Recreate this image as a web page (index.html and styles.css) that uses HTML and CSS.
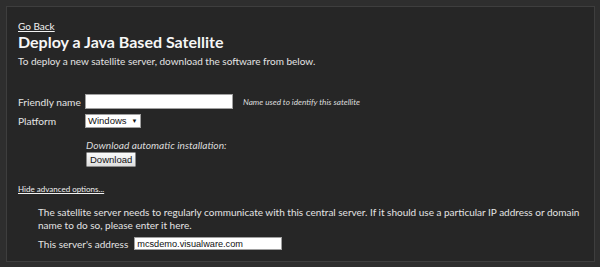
FILE: index.html
```html
<!DOCTYPE html>
<html>
<head>
<meta charset="utf-8">
<link rel="stylesheet" href="styles.css">
</head>
<body>
<div class="panel">
  <a class="back" href="#">Go Back</a>
  <h1 class="title">Deploy a Java Based Satellite</h1>
  <p class="intro">To deploy a new satellite server, download the software from below.</p>
  <div class="form">
    <div class="row">
      <span class="label">Friendly name</span>
      <input class="text name" type="text">
      <span class="hint">Name used to identify this satellite</span>
    </div>
    <div class="row">
      <span class="label">Platform</span>
      <span class="select">Windows <span class="arrow">▼</span></span>
    </div>
    <div class="download">
      <div class="dl-label">Download automatic installation:</div>
      <button class="btn">Download</button>
    </div>
  </div>
  <a class="toggle" href="#">Hide advanced options...</a>
  <div class="advanced">
    <p class="desc">The satellite server needs to regularly communicate with this central server. If it should use a particular IP address or domain name to do so, please enter it here.</p>
    <div class="row addr-row">
      <span class="addr-label">This server's address</span>
      <input class="text addr" type="text" value="mcsdemo.visualware.com">
    </div>
  </div>
</div>
</body>
</html>
```
FILE: styles.css
```css
html, body {
  margin: 0;
  padding: 0;
  background: #2e2e2e;
}
body {
  padding: 6px 5px 0 6px;
  font-family: Lato, "Open Sans", sans-serif;
  color: #e8e8e8;
}
.panel {
  background: #262626;
  border: 1px solid #3e3e3e;
  height: 256px;
  padding: 13px 11px 0 11px;
  box-sizing: border-box;
  font-size: 10px;
}
.back {
  display: block;
  color: #f2f2f2;
  font-size: 10px;
  line-height: 12px;
  text-decoration: underline;
}
.title {
  margin: 0 0 2px 0;
  font-size: 16px;
  line-height: 20px;
  font-weight: 700;
  color: #f6f6f6;
}
.intro {
  margin: 0;
  font-size: 10px;
  line-height: 14px;
  color: #e4e4e4;
}
.form {
  margin-top: 24px;
}
.row {
  display: flex;
  align-items: center;
  height: 19px;
}
.label {
  width: 67px;
  flex: none;
  white-space: nowrap;
  font-size: 10.2px;
  color: #e4e4e4;
}
.text {
  height: 15px;
  box-sizing: border-box;
  border: 1px solid #a0a0a0;
  background: #fff;
  padding: 0 2px;
  font-family: "Liberation Sans", Arial, sans-serif;
  font-size: 9.2px;
  color: #111;
  margin: 0;
  outline: none;
}
.name {
  width: 148px;
}
.hint {
  margin-left: 10px;
  font-style: italic;
  font-size: 8.2px;
  color: #dcdcdc;
}
.select {
  display: inline-flex;
  align-items: center;
  width: 56px;
  height: 14px;
  box-sizing: border-box;
  border: 1px solid #a0a0a0;
  background: #fff;
  padding: 0 0 0 2px;
  font-family: "Liberation Sans", Arial, sans-serif;
  font-size: 9.5px;
  color: #111;
  gap: 5px;
}
.arrow {
  font-size: 6px;
}
.download {
  margin: 8px 0 0 68px;
}
.dl-label {
  font-style: italic;
  font-size: 10.2px;
  line-height: 14px;
  color: #dcdcdc;
}
.btn {
  display: block;
  height: 15px;
  margin: 0;
  padding: 0 3px;
  border: 1px solid #8a8a8a;
  background: linear-gradient(#fbfbfb, #dedede);
  font-family: "Liberation Sans", Arial, sans-serif;
  font-size: 9.5px;
  color: #111;
  border-radius: 1px;
}
.toggle {
  display: block;
  margin-top: 17px;
  font-size: 8px;
  line-height: 10px;
  color: #f0f0f0;
  text-decoration: underline;
}
.advanced {
  margin: 12px 0 0 20px;
}
.desc {
  margin: 0;
  font-size: 10px;
  line-height: 12.5px;
  color: #e4e4e4;
}
.addr-row {
  margin-top: 3px;
}
.addr-label {
  font-size: 10px;
  margin-right: 6px;
  color: #e4e4e4;
}
.addr {
  width: 148px;
  height: 13px;
}
```
